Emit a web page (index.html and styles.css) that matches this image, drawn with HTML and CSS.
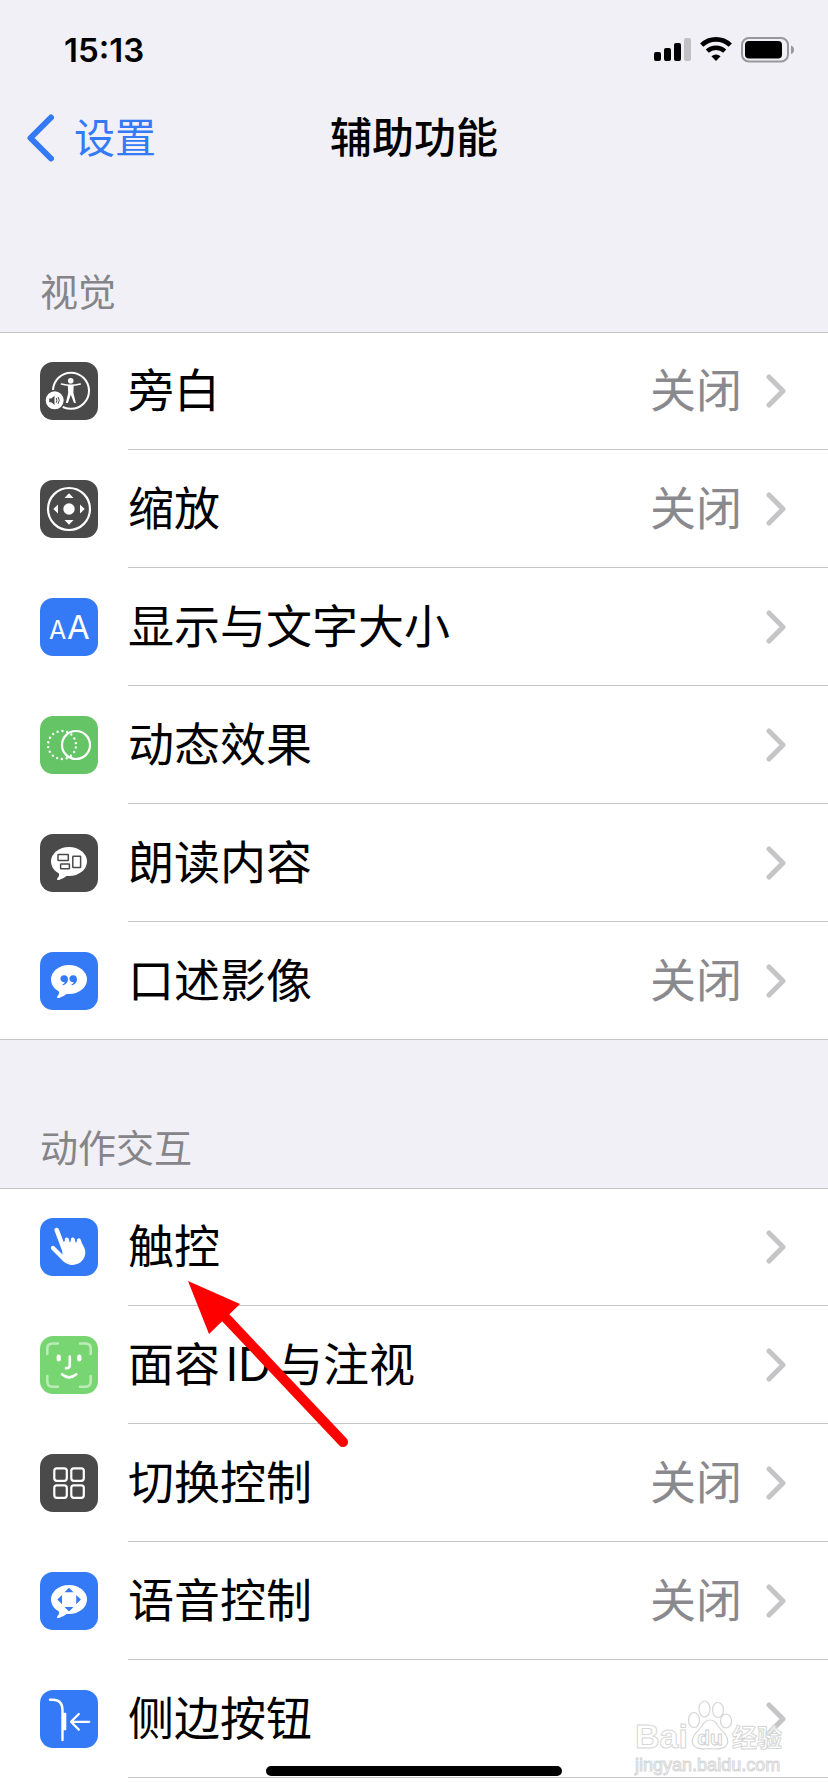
FILE: index.html
```html
<!DOCTYPE html>
<html lang="zh-CN">
<head>
  <meta charset="utf-8">
  <meta name="viewport" content="width=device-width">
  <title>辅助功能</title>
  <link rel="stylesheet" href="styles.css">
</head>
<body>

<svg class="defs" aria-hidden="true">
  <symbol id="chevron" viewBox="0 0 20 34">
    <path d="M3 3 L17 17 L3 31" fill="none" stroke="#c5c5c7" stroke-width="5" stroke-linecap="round" stroke-linejoin="round"/>
  </symbol>
  <symbol id="bubble" viewBox="0 0 58 58">
    <ellipse cx="29" cy="27.5" rx="18" ry="14.5" fill="#fff"/>
    <path d="M18 38 Q20.5 41 17.5 44 Q16 46.5 19 46 Q23 45 28 41 Z" fill="#fff"/>
  </symbol>
</svg>

<div class="status">
  <span class="time">15:13</span>
  <div class="status-icons">
    <svg width="37" height="26" viewBox="0 0 37 26">
      <rect x="0" y="15" width="7" height="9" rx="2"/>
      <rect x="10" y="11" width="7" height="13" rx="2"/>
      <rect x="20" y="6" width="7" height="18" rx="2"/>
      <rect x="30" y="1" width="7" height="23" rx="2" fill="#c1c0c5"/>
    </svg>
    <svg width="32" height="26" viewBox="0 0 32 26">
      <path d="M1.7 8.2 A20.5 20.5 0 0 1 30.3 8.2" fill="none" stroke="#000" stroke-width="4.6"/>
      <path d="M7.3 14.2 A12.5 12.5 0 0 1 24.7 14.2" fill="none" stroke="#000" stroke-width="4.4"/>
      <path d="M11.4 19.2 Q16 15.6 20.6 19.2 L16.5 23.6 Q16 24.2 15.5 23.6 Z"/>
    </svg>
    <svg width="54" height="26" viewBox="0 0 54 26">
      <rect x="1" y="1" width="46" height="23.5" rx="7" fill="none" stroke="#98979b" stroke-width="2"/>
      <rect x="4" y="4" width="37" height="17.5" rx="4"/>
      <path d="M50 8.5 Q53 9.5 53 12.7 Q53 16 50 17 Z" fill="#98979b"/>
    </svg>
  </div>
</div>

<header class="nav">
  <a class="back" href="#settings">
    <svg width="27" height="48" viewBox="0 0 27 48">
      <path d="M24 3.5 L3.5 24 L24 44.5" fill="none" stroke="#347af6" stroke-width="6" stroke-linecap="round" stroke-linejoin="round"/>
    </svg>
    <span>设置</span>
  </a>
  <h1>辅助功能</h1>
</header>

<h2>视觉</h2>
<ul class="list">
  <li><a class="row" href="#voiceover">
    <svg class="icon dark" viewBox="0 0 58 58">
      <circle cx="31" cy="28.7" r="18" fill="none" stroke="#fff" stroke-width="2"/>
      <circle cx="30.7" cy="18.8" r="2.8" fill="#fff"/>
      <path d="M21.5 22 Q31 24.5 40.2 22" fill="none" stroke="#fff" stroke-width="1.7" stroke-linecap="round"/>
      <path d="M27.8 23 H33.7 L33.4 31 L35.9 41 H34 L30.8 32.8 L27.9 41 H25.8 L28.2 31 Z" fill="#fff"/>
      <circle cx="14.7" cy="38.3" r="9.8" fill="#fff" stroke="#4a4a4a" stroke-width="1.6"/>
      <path d="M9.2 36.5 H11.3 L14.5 33.8 V43 L11.3 40.2 H9.2 Z" fill="#4a4a4a"/>
      <path d="M16.3 36 Q17.5 38.3 16.3 40.6 M18 34.8 Q20.5 38.3 18 41.8" fill="none" stroke="#4a4a4a"/>
    </svg>
    <span class="label">旁白</span>
    <span class="value">关闭</span>
    <svg class="chevron"><use href="#chevron"/></svg>
  </a></li>
  <li><a class="row" href="#zoom">
    <svg class="icon dark" viewBox="0 0 58 58">
      <circle cx="29" cy="29" r="21" fill="none" stroke="#fff" stroke-width="2.2"/>
      <g fill="#fff">
        <circle cx="29" cy="29" r="5.7"/>
        <path d="M29 13.2 L33.5 18 H24.5 Z M29 44.8 L33.5 40 H24.5 Z M13.3 29 L18 24.5 V33.5 Z M44.7 29 L40 24.5 V33.5 Z"/>
      </g>
    </svg>
    <span class="label">缩放</span>
    <span class="value">关闭</span>
    <svg class="chevron"><use href="#chevron"/></svg>
  </a></li>
  <li><a class="row" href="#display">
    <svg class="icon blue" viewBox="0 0 58 58">
      <text class="aa" x="9" y="41" font-size="25">A</text>
      <text class="aa" x="27" y="41" font-size="33">A</text>
    </svg>
    <span class="label">显示与文字大小</span>
    <svg class="chevron"><use href="#chevron"/></svg>
  </a></li>
  <li><a class="row" href="#motion">
    <svg class="icon green" viewBox="0 0 58 58">
      <circle cx="22" cy="29" r="14" fill="none" stroke="#fff" stroke-width="2.4" stroke-linecap="round" stroke-dasharray="0 4.886" transform="rotate(10 22 29)"/>
      <circle cx="36" cy="29" r="14" fill="none" stroke="#fff" stroke-width="2.2"/>
    </svg>
    <span class="label">动态效果</span>
    <svg class="chevron"><use href="#chevron"/></svg>
  </a></li>
  <li><a class="row" href="#spoken">
    <svg class="icon dark" viewBox="0 0 58 58">
      <use href="#bubble"/>
      <g fill="none" stroke="#4a4a4a" stroke-width="1.5">
        <rect x="18" y="20.5" width="10.3" height="6" rx="0.5"/>
        <rect x="20.6" y="30" width="8.8" height="4.7" rx="0.5"/>
        <rect x="32.8" y="22.2" width="7.8" height="11.2" rx="0.5"/>
      </g>
    </svg>
    <span class="label">朗读内容</span>
    <svg class="chevron"><use href="#chevron"/></svg>
  </a></li>
  <li><a class="row" href="#descriptions">
    <svg class="icon blue" viewBox="0 0 58 58">
      <use href="#bubble"/>
      <path id="quote" d="M24.3 23.2 A3.5 3.5 0 1 0 25 30 Q24.5 31.8 22.5 32.5 Q22 33.4 23.2 33.3 Q28.2 31.5 28 27 Q27.7 23.3 24.3 23.2 Z" fill="#347af6"/>
      <use href="#quote" x="9"/>
    </svg>
    <span class="label">口述影像</span>
    <span class="value">关闭</span>
    <svg class="chevron"><use href="#chevron"/></svg>
  </a></li>
</ul>

<h2>动作交互</h2>
<ul class="list list-last">
  <li><a class="row" href="#touch">
    <svg class="icon blue" viewBox="0 0 58 58">
      <g fill="none" stroke="#fff" stroke-linecap="round">
        <path d="M16.7 12 L23.5 30" stroke-width="4.6"/>
        <path d="M13 30 L24 41" stroke-width="4.2"/>
        <path d="M26.8 21.5 L29 30 M32.8 21.5 L34.5 30 M38.8 22.3 L41.5 30" stroke-width="4"/>
      </g>
      <path d="M21 27 L25.5 22 L40 23.5 Q45.7 29.5 45.3 35.5 Q44.5 42 38.5 45.6 Q30 49 23.5 43.5 L18 37 L22.7 36.5 Z" fill="#fff"/>
      <path d="M29.7 21 L30 23.5 M35.7 21.5 L36 23.8" stroke="#347af6" stroke-width="1.2" stroke-linecap="round"/>
    </svg>
    <span class="label">触控</span>
    <svg class="chevron"><use href="#chevron"/></svg>
  </a></li>
  <li><a class="row" href="#faceid">
    <svg class="icon lime" viewBox="0 0 58 58">
      <g fill="none" stroke="#fff" stroke-linecap="round">
        <path d="M7.3 18 V12.5 Q7.3 7.5 12.5 7.5 H18 M40 7.5 H45.5 Q50.7 7.5 50.7 12.5 V18 M50.7 40 V45.5 Q50.7 50.7 45.5 50.7 H40 M18 50.7 H12.5 Q7.3 50.7 7.3 45.5 V40" stroke-width="2.6" opacity="0.5"/>
        <path d="M18.7 20.5 V23.5 M39.3 20.5 V23.5" stroke-width="4.2"/>
        <path d="M29.8 20.5 V29.5 Q29.8 32.2 26 32.2 M22 38.3 Q29 44.5 36.3 38.3" stroke-width="2.6"/>
      </g>
    </svg>
    <span class="label">面容ID与注视</span>
    <svg class="chevron"><use href="#chevron"/></svg>
  </a></li>
  <li><a class="row" href="#switch">
    <svg class="icon dark" viewBox="0 0 58 58">
      <g fill="none" stroke="#fff" stroke-width="2.2">
        <rect x="14.3" y="14.3" width="12.5" height="12.5" rx="2.5"/>
        <rect x="31.3" y="14.3" width="12.5" height="12.5" rx="2.5"/>
        <rect x="14.3" y="31.3" width="12.5" height="12.5" rx="2.5"/>
        <rect x="31.3" y="31.3" width="12.5" height="12.5" rx="2.5"/>
      </g>
    </svg>
    <span class="label">切换控制</span>
    <span class="value">关闭</span>
    <svg class="chevron"><use href="#chevron"/></svg>
  </a></li>
  <li><a class="row" href="#voice">
    <svg class="icon blue" viewBox="0 0 58 58">
      <use href="#bubble"/>
      <path d="M29 15.7 L33.5 20.3 H24.5 Z M29 39.5 L33.5 34.9 H24.5 Z M17.3 27.6 L22 23 V32.2 Z M40.9 27.6 L36.2 23 V32.2 Z" fill="#347af6"/>
    </svg>
    <span class="label">语音控制</span>
    <span class="value">关闭</span>
    <svg class="chevron"><use href="#chevron"/></svg>
  </a></li>
  <li><a class="row" href="#side-button">
    <svg class="icon blue" viewBox="0 0 58 58">
      <path d="M10 9.7 H12.5 Q22.5 9.7 22.5 20 V50" fill="none" stroke="#fff" stroke-width="2.4" stroke-linecap="round"/>
      <rect x="22.5" y="22.7" width="3.8" height="17.5" rx="1" fill="#fff"/>
      <path d="M49.3 31.8 H31 M38.8 24 L31 31.8 L38.8 39.6" fill="none" stroke="#fff" stroke-width="2.2" stroke-linecap="round" stroke-linejoin="round"/>
    </svg>
    <span class="label">侧边按钮</span>
    <svg class="chevron"><use href="#chevron"/></svg>
  </a></li>
</ul>

<svg class="arrow" viewBox="0 0 162 168" aria-hidden="true">
  <path d="M37 36 L155 161" stroke="#f00" stroke-width="10" stroke-linecap="round"/>
  <path d="M0 0 L52 23 L21 53 Z" fill="#f00"/>
</svg>

<div class="watermark">
  <div class="brand">
    <span>Bai</span>
    <svg width="44" height="50" viewBox="0 0 44 50">
      <g fill="#fff" fill-opacity="0.7" stroke="#d6d6d6" stroke-width="1.2">
        <ellipse cx="6" cy="20" rx="5.5" ry="7.5"/>
        <ellipse cx="16.5" cy="9" rx="5.5" ry="8"/>
        <ellipse cx="30" cy="10" rx="5.5" ry="7.5"/>
        <ellipse cx="38" cy="21" rx="5.5" ry="7"/>
        <path d="M22 20 Q27 20 30 26 Q33 30 37 34 Q42 41 38 46 Q34 50 22 48.5 Q10 50 6 46 Q2 41 7 34 Q11 30 14 26 Q17 20 22 20 Z"/>
      </g>
      <text class="du" x="22" y="45" text-anchor="middle">du</text>
    </svg>
    <span class="cn">经验</span>
  </div>
  <div class="site">jingyan.baidu.com</div>
</div>

<div class="home-bar"></div>

</body>
</html>
```

FILE: styles.css
```css
* {
  box-sizing: border-box;
}

body {
  position: relative;
  display: flex;
  flex-direction: column;
  min-height: 100vh;
  margin: 0;
  overflow-x: hidden;
  background: #f1f0f6;
  color: #000;
  font-family: Inter, "Noto Sans CJK SC", sans-serif;
  text-autospace: normal;
}

a {
  color: inherit;
  text-decoration: none;
}

svg {
  display: block;
  flex: none;
}

.defs {
  position: absolute;
  width: 0;
  height: 0;
}

/* top bars */
.status {
  display: flex;
  align-items: center;
  justify-content: space-between;
  height: 100px;
  padding: 0 33px 0 64px;
}

.time {
  font-size: 33px;
  font-weight: 600;
}

.status-icons {
  display: flex;
  gap: 9px;
}

.nav {
  display: grid;
  grid-template-columns: 1fr auto 1fr;
  align-items: center;
  height: 76px;
  padding: 0 27px;
}

.back {
  display: flex;
  align-items: center;
  gap: 20px;
  color: #347af6;
  font-size: 41px;
}

h1 {
  margin: 0;
  font-size: 42px;
  font-weight: 500;
}

h1,
.back span,
.label,
.value {
  line-height: 60px;
}

/* lists */
h2 {
  margin: 0;
  padding: 88px 40px 12px;
  color: #858589;
  font-size: 38px;
  font-weight: 400;
  line-height: 56px;
}

.list {
  margin: 0;
  padding: 0;
  list-style: none;
  background: #fff;
  border-top: 1px solid #c6c6c8;
}

.list li:first-child {
  margin-top: -1px;
}

.list-last {
  flex: 1;
}

.list + h2 {
  padding-top: 80px;
}

.row {
  display: flex;
  align-items: center;
  height: 118px;
  padding: 0 42px 0 40px;
  font-size: 46px;
  background: linear-gradient(#c6c6c8, #c6c6c8) 128px 100% / 100% 1px no-repeat;
}

.list:not(.list-last) li:last-child .row {
  background-position: 0 100%;
}

.icon {
  width: 58px;
  height: 58px;
  margin-right: 30px;
  border-radius: 13px;
}

.dark {
  background: #4a4a4a;
}

.blue {
  background: #347af6;
}

.green {
  background: #65c466;
}

.lime {
  background: #78d672;
}

.aa {
  fill: #fff;
}

.label,
.value {
  padding-bottom: 3px;
}

.label {
  flex: 1;
}

.value {
  color: #8a8a8e;
}

.chevron {
  width: 20px;
  height: 34px;
  margin-left: 24px;
}

/* overlays */
.arrow {
  position: absolute;
  top: 1281px;
  left: 188px;
  width: 162px;
  height: 168px;
}

.home-bar {
  position: absolute;
  bottom: 16px;
  left: 50%;
  width: 296px;
  height: 10px;
  margin-left: -148px;
  border-radius: 5px;
  background: #000;
}

.watermark {
  position: absolute;
  right: 46px;
  bottom: 14px;
  color: rgba(255, 255, 255, 0.7);
  font-family: "Liberation Sans", sans-serif;
  -webkit-text-stroke: 1px #d6d6d6;
}

.brand {
  display: flex;
  align-items: flex-end;
  margin-bottom: 2px;
  font-size: 34px;
  font-weight: 700;
  line-height: 28px;
}

.cn {
  font-family: "Noto Sans CJK SC", sans-serif;
  font-size: 25px;
}

.du {
  fill: #fff;
  stroke: #d0d0d0;
  stroke-width: 1px;
  font-size: 21px;
  font-weight: 700;
}

.site {
  font-size: 18px;
  line-height: 26px;
}
```
